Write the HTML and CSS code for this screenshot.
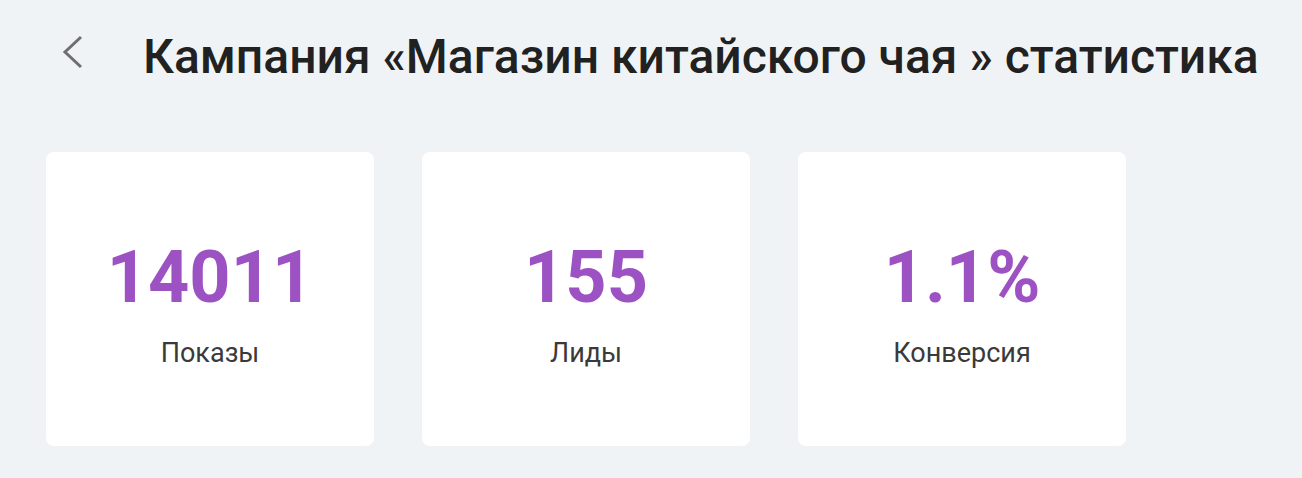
FILE: index.html
```html
<!DOCTYPE html>
<html lang="ru">
  <head>
    <meta charset="UTF-8" />
    <meta name="viewport" content="width=device-width, initial-scale=1.0" />
    <title>Статистика кампании</title>
    <link rel="stylesheet" href="styles.css">
  </head>
  <body>
    <div class="page">
      <div class="header">
        <a class="btn-back" href="#" aria-label="Назад">
          <svg width="22" height="34" viewBox="0 0 22 34">
            <polyline points="19,2 3,17 19,32" fill="none" stroke="#6f6f6f" stroke-width="3" />
          </svg>
        </a>
        <h1>Кампания «Магазин китайского чая » статистика</h1>
      </div>
      <div class="stats">
        <div class="stat-card">
          <div class="stat-value">14011</div>
          <div class="stat-label">Показы</div>
        </div>
        <div class="stat-card">
          <div class="stat-value">155</div>
          <div class="stat-label">Лиды</div>
        </div>
        <div class="stat-card">
          <div class="stat-value">1.1%</div>
          <div class="stat-label">Конверсия</div>
        </div>
      </div>
    </div>
  </body>
</html>
```

FILE: styles.css
```css
body {
  font-family: Roboto, "Noto Sans", Arial, sans-serif;
  background-color: #eff3f6;
  margin: 0;
  padding: 0;
  color: #212121;
}
.page {
  padding: 24px 0 24px 46px;
}
.header {
  display: flex;
  align-items: center;
  height: 64px;
}
.btn-back {
  display: flex;
  flex-shrink: 0;
  align-self: flex-start;
  margin-top: 11px;
  width: 97px;
  padding-left: 16px;
  box-sizing: border-box;
}
.header h1 {
  margin: 0;
  font-size: 48px;
  font-weight: 500;
  white-space: nowrap;
  color: #212121;
}
.stats {
  display: flex;
  gap: 48px;
  margin-top: 64px;
}
.stat-card {
  width: 328px;
  height: 294px;
  background: #fff;
  border-radius: 8px;
  box-sizing: border-box;
  padding-top: 86px;
  text-align: center;
}
.stat-value {
  font-size: 72px;
  font-weight: 700;
  line-height: 80px;
  color: #9d52c4;
}
.stat-label {
  margin-top: 19px;
  font-size: 27px;
  line-height: 32px;
  color: #3a3a3a;
}
```
